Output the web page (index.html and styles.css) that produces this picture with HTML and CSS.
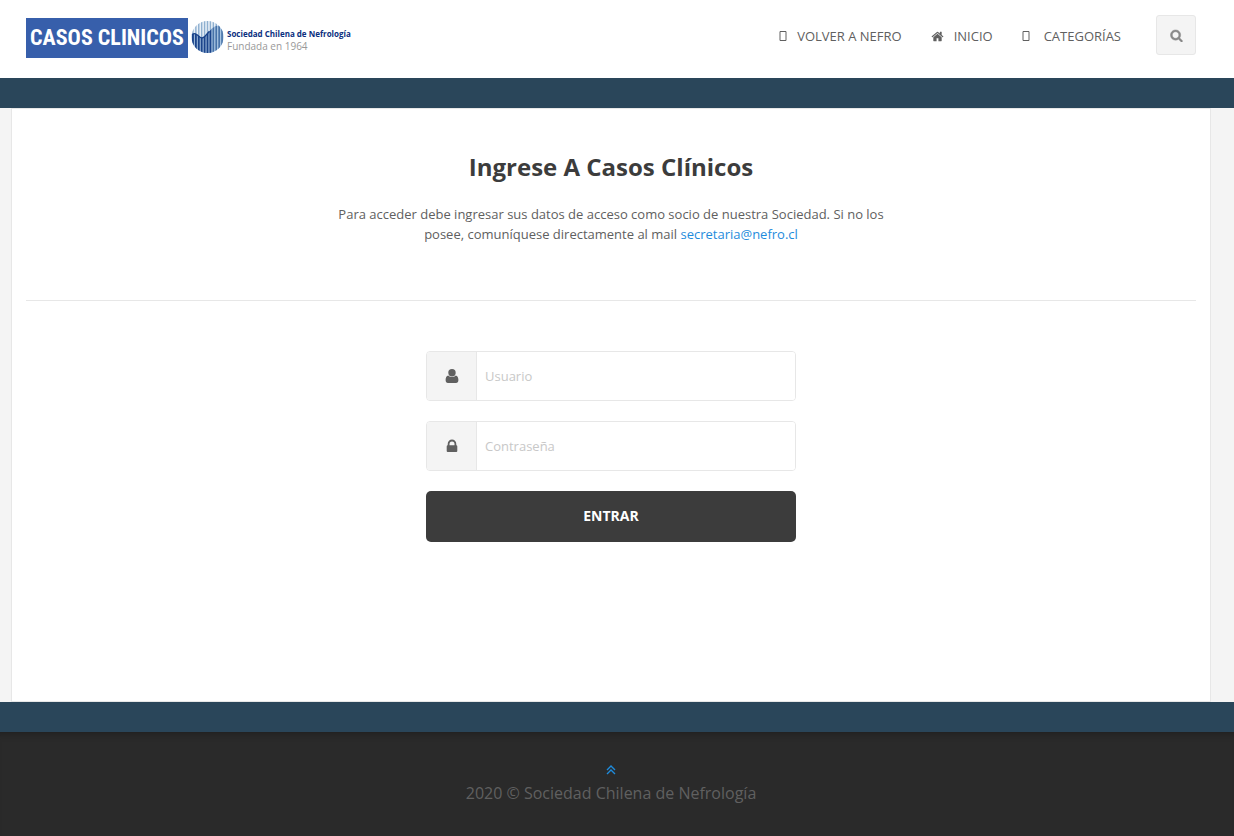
FILE: index.html
```html
<!DOCTYPE html>
<html lang="es">

<head>
  <meta charset="UTF-8" />
  <meta name="viewport" content="width=device-width, initial-scale=1.0" />
  <title>Casos Clínicos</title>
  <link rel="stylesheet" href="styles.css">
</head>

<body>
  <!-- Header -->
  <header class="header">
    <div class="container header-row">
      <a href="#" class="logo">
        <span class="logo-name">CASOS CLINICOS</span>
        <svg class="logo-globe" viewBox="0 0 34 34" aria-hidden="true">
          <defs>
            <clipPath id="globe"><circle cx="17" cy="17" r="16.500" /></clipPath>
            <clipPath id="lower"><path d="M0 15C3 12 6 14 9 17C13 20 15 15 19 11C23 6 28 4 31 6L34 12V34H0Z" /></clipPath>
          </defs>
          <g clip-path="url(#globe)">
            <path d="M0 0H34V34H0Z" fill="#edf3f9" />
            <path d="M2 0V34M5 0V34M8 0V34M11 0V34M14 0V34M17 0V34M20 0V34M23 0V34M26 0V34M29 0V34M32 0V34" stroke="#8fb0d0" stroke-width="1.500" />
            <g clip-path="url(#lower)">
              <path d="M0 0H34V34H0Z" fill="#a9c5e2" />
              <path d="M2 0V34M5 0V34M8 0V34M11 0V34M14 0V34M17 0V34M20 0V34" stroke="#1b448b" stroke-width="2" />
              <path d="M23 0V34M26 0V34M29 0V34M32 0V34" stroke="#4772a8" stroke-width="1.700" />
            </g>
            <path d="M1 15C3 12 6 14 9 17C13 20 15 15 19 11" fill="none" stroke="#1b448b" stroke-width="1.500" />
          </g>
        </svg>
        <span class="logo-text">
          <strong>Sociedad Chilena de Nefrología</strong>
          <span>Fundada en 1964</span>
        </span>
      </a>
      <nav class="menu">
        <a href="#"><svg class="icon-box" viewBox="0 0 8 10"><path d="M1 .5H7V9.500H1Z" /></svg>VOLVER A NEFRO</a>
        <a href="#"><svg class="icon-home" viewBox="0 0 1792 1792"><path d="M1472 992v480q0 26-19 45t-45 19h-384v-384h-256v384h-384q-26 0-45-19t-19-45v-480q0-1 .5-3t.5-3l575-474 575 474q1 2 1 6zm223-69l-62 74q-8 9-21 11h-3q-13 0-21-7l-692-577-692 577q-12 8-24 7-13-2-21-11l-62-74q-8-10-7-23.500t11-21.500l719-599q32-26 76-26t76 26l244 204v-195q0-14 9-23t23-9h192q14 0 23 9t9 23v408l219 182q10 8 11 21.500t-7 23.500z" /></svg>INICIO</a>
        <a href="#" class="menu-wide"><svg class="icon-box" viewBox="0 0 8 10"><path d="M1 .5H7V9.500H1Z" /></svg>CATEGORÍAS</a>
        <button type="button" class="search-btn" aria-label="Buscar">
          <svg class="icon-search" viewBox="0 0 1792 1792"><path d="M1216 832q0-185-131.500-316.500t-316.500-131.500-316.500 131.500-131.500 316.500 131.500 316.500 316.500 131.500 316.500-131.500 131.500-316.500zm512 832q0 52-38 90t-90 38q-54 0-90-38l-343-342q-179 124-399 124-143 0-273.500-55.500t-225-150-150-225-55.500-273.500 55.500-273.500 150-225 225-150 273.500-55.500 273.500 55.500 225 150 150 225 55.500 273.500q0 220-124 399l343 343q37 37 37 90z" /></svg>
        </button>
      </nav>
    </div>
  </header>

  <div class="bar"></div>

  <!-- Login -->
  <div class="page">
    <main class="container content">
      <div class="intro">
        <h1>Ingrese A Casos Clínicos</h1>
        <p>Para acceder debe ingresar sus datos de acceso como socio de nuestra Sociedad. Si no los posee, comuníquese directamente al mail <a href="mailto:secretaria@nefro.cl">secretaria@nefro.cl</a></p>
      </div>
      <form class="login-form">
        <div class="field">
          <label for="usuario" aria-label="Usuario">
            <svg class="icon-field" viewBox="0 0 16 16"><circle cx="8" cy="4.700" r="3.700" /><path d="M4.200 7.400Q5.800 9 8 9T11.800 7.400C13.600 7.500 14.400 9.600 14.400 12C14.400 13.900 13.500 15 12 15H4C2.500 15 1.600 13.900 1.600 12C1.600 9.600 2.400 7.500 4.200 7.400Z" /></svg>
          </label>
          <input type="text" id="usuario" name="usuario" placeholder="Usuario" />
        </div>
        <div class="field">
          <label for="clave" aria-label="Contraseña">
            <svg class="icon-field" viewBox="0 0 16 16"><path d="M3.700 7.300V5.900a4.300 4.300 0 0 1 8.600 0V7.300q1 .1 1 1.100V13q0 1-1 1H3.700q-1 0-1-1V8.400q0-1 1-1.100ZM5.500 7.300H10.500V5.900a2.500 2.500 0 0 0-5 0Z" /></svg>
          </label>
          <input type="password" id="clave" name="clave" placeholder="Contraseña" />
        </div>
        <button type="submit" class="submit-btn">ENTRAR</button>
      </form>
    </main>
  </div>

  <div class="bar"></div>

  <!-- Footer -->
  <footer class="footer">
    <a href="#" class="to-top" aria-label="Subir">
      <svg viewBox="0 0 10 10"><path d="M1 5L5 1L9 5M1 9L5 5L9 9" /></svg>
    </a>
    <p>2020 © Sociedad Chilena de Nefrología</p>
  </footer>
</body>

</html>
```
FILE: styles.css
```css
* {
  box-sizing: border-box;
}

body {
  margin: 0;
  font-family: "Open Sans", sans-serif;
  font-size: 13px;
  line-height: 20px;
  color: #606060;
  background-color: #2a2a2a;
}

a {
  color: #1e8bdc;
  text-decoration: none;
}

svg {
  display: block;
  fill: currentColor;
}

.container {
  max-width: 1200px;
  margin: 0 auto;
  padding: 0 15px;
}

/* Header */
.header {
  background-color: #fff;
  padding: 15px 12px 20px 0;
}

.header-row {
  display: flex;
  justify-content: space-between;
  align-items: flex-start;
}

.logo {
  display: flex;
  align-items: flex-start;
  gap: 3px;
  margin-top: 3px;
}

.logo-name {
  width: 162px;
  height: 40px;
  background-color: #375fab;
  color: #fff;
  font-family: "Roboto Condensed", "Liberation Sans Narrow", sans-serif;
  font-size: 22px;
  font-weight: bold;
  line-height: 40px;
  text-align: center;
  white-space: nowrap;
}

.logo-globe {
  width: 33px;
  height: 34px;
  margin-top: 2px;
}

.logo-text {
  display: flex;
  flex-direction: column;
  padding-top: 10px;
  font-size: 10px;
  line-height: 12px;
  color: #999;
  white-space: nowrap;
}

.logo-text strong {
  font-size: 8px;
  color: #0b2f80;
}

.menu {
  display: flex;
  align-items: center;
  gap: 29px;
}

.menu a {
  display: flex;
  align-items: center;
  gap: 10px;
  padding-top: 2px;
  color: #606060;
}

.menu .menu-wide {
  gap: 14px;
  margin-right: 6px;
}

.icon-box {
  width: 8px;
  height: 10px;
  fill: none;
  stroke: #606060;
}

.icon-home,
.icon-search {
  width: 13px;
  height: 13px;
}

.icon-search {
  stroke: currentColor;
  stroke-width: 60;
}

.search-btn {
  display: flex;
  align-items: center;
  justify-content: center;
  width: 40px;
  height: 40px;
  padding: 0;
  border: 1px solid #e7e7e7;
  border-radius: 3px;
  background-color: #f4f4f4;
  color: #888;
  cursor: pointer;
}

.bar {
  height: 30px;
  background-color: #2a465a;
}

/* Content box */
.page {
  background-color: #f4f4f4;
  padding-right: 12px;
}

.content {
  border: 1px solid #e7e7e7;
  background-color: #fff;
  padding: 39px 14px 159px;
}

.intro {
  border-bottom: 1px solid #e7e7e7;
  padding-bottom: 56px;
  text-align: center;
}

.intro h1 {
  margin: 0 0 18px;
  font-size: 24px;
  line-height: 38px;
  color: #3c3c3c;
}

.intro p {
  max-width: 570px;
  margin: 0 auto;
}

/* Login form */
.login-form {
  display: flex;
  flex-direction: column;
  gap: 20px;
  max-width: 370px;
  margin: 50px auto 0;
}

.field {
  display: flex;
  height: 50px;
  border: 1px solid #e7e7e7;
  border-radius: 4px;
  overflow: hidden;
}

.field label {
  display: flex;
  align-items: center;
  justify-content: center;
  width: 50px;
  border-right: 1px solid #e7e7e7;
  background-color: #f4f4f4;
}

.icon-field {
  width: 16px;
  height: 16px;
}

.field input {
  flex: 1;
  min-width: 0;
  padding: 0 8px;
  border: none;
  outline: none;
  font: inherit;
  color: #606060;
}

.field input::placeholder {
  color: #c8c8c8;
}

.submit-btn {
  height: 51px;
  padding: 0 0 2px;
  border: none;
  border-radius: 5px;
  background-color: #3c3c3c;
  color: #fff;
  font-family: inherit;
  font-size: 14px;
  font-weight: bold;
  cursor: pointer;
}

/* Footer */
.footer {
  padding: 26px 12px 31px 0;
  background-color: #2a2a2a;
  box-shadow: inset 0 8px 6px -6px #202020;
  color: #606060;
  font-size: 16px;
  line-height: 24px;
  text-align: center;
}

.footer p {
  margin: 0;
}

.to-top {
  display: flex;
  align-items: center;
  justify-content: center;
  height: 23px;
}

.to-top svg {
  width: 10px;
  height: 10px;
  fill: none;
  stroke: #1e8bdc;
  stroke-width: 1.4;
}
```
